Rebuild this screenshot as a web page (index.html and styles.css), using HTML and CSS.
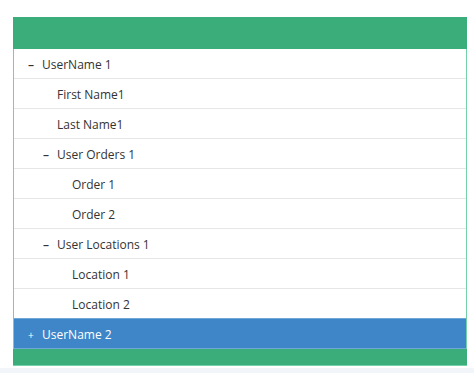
FILE: index.html
```html
<!DOCTYPE html>
<html lang="en">
<head>
    <meta charset="UTF-8">
    <meta name="viewport" content="width=device-width, initial-scale=1.0">
    <title>User Tree</title>
    <link rel="stylesheet" href="styles.css">
</head>
<body>
    <div class="page">
        <div class="tree">
            <div class="tree-header"></div>
            <ul class="tree-list">
                <li class="node level-0"><span class="toggle">&ndash;</span>UserName 1</li>
                <li class="node level-1"><span class="toggle"></span>First Name1</li>
                <li class="node level-1"><span class="toggle"></span>Last Name1</li>
                <li class="node level-1"><span class="toggle">&ndash;</span>User Orders 1</li>
                <li class="node level-2"><span class="toggle"></span>Order 1</li>
                <li class="node level-2"><span class="toggle"></span>Order 2</li>
                <li class="node level-1"><span class="toggle">&ndash;</span>User Locations 1</li>
                <li class="node level-2"><span class="toggle"></span>Location 1</li>
                <li class="node level-2"><span class="toggle"></span>Location 2</li>
                <li class="node level-0 selected"><span class="toggle">+</span>UserName 2</li>
            </ul>
            <div class="tree-footer"></div>
        </div>
    </div>
    <div class="strip"></div>
</body>
</html>
```

FILE: styles.css
```css
* {
    margin: 0;
    padding: 0;
    box-sizing: border-box;
}

body {
    font-family: 'Open Sans', 'Liberation Sans', sans-serif;
    background: #ffffff;
    color: #333;
    height: 373px;
    display: flex;
    flex-direction: column;
}

.page {
    padding: 17px 0 0 13px;
}

.tree {
    width: 454px;
    border: 1px solid #72d1a8;
    border-top: none;
    background: white;
}

.tree-header {
    height: 32px;
    background: #3bad7b;
    margin: 0 -1px;
}

.tree-list {
    list-style: none;
}

.node {
    height: 30px;
    display: flex;
    align-items: center;
    font-size: 12px;
    border-bottom: 1px solid #e6e6e6;
    padding-top: 2px;
}

.toggle {
    width: 14px;
    font-size: 12px;
    font-weight: 600;
    text-align: left;
}

.level-0 {
    padding-left: 14px;
}

.level-1 {
    padding-left: 29px;
}

.level-2 {
    padding-left: 44px;
}

.selected {
    background: #3e86c8;
    color: white;
    border-top: 1px solid #6fa8d8;
    margin-top: -1px;
    height: 31px;
    border-bottom: 1px solid #6fa8d8;
}

.selected .toggle {
    font-size: 10px;
    font-weight: 400;
}

.tree-footer {
    height: 16px;
    background: #3bad7b;
    margin: 0 -1px;
}

.strip {
    flex: 1;
    margin-top: 2px;
    background: #f2f6fa;
}
```
